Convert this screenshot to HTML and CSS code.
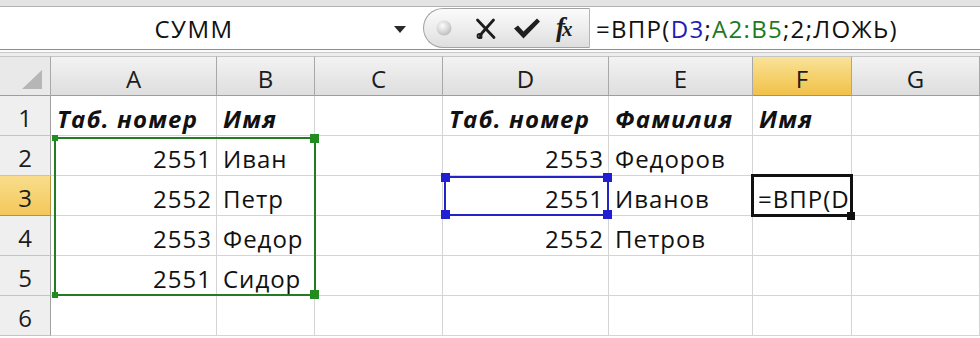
FILE: index.html
```html
<!DOCTYPE html>
<html lang="ru">
<head>
<meta charset="utf-8">
<link rel="stylesheet" href="styles.css">
</head>
<body>
<div class="app">
  <div class="topstrip"></div>
  <div class="fbar">
    <div class="namebox">
      <span class="name">СУММ</span>
      <span class="dd"><svg width="12" height="7" viewBox="0 0 12 7"><path d="M0 0 H12 L6 7 Z" fill="#2a2a2a"/></svg></span>
    </div>
    <div class="btns">
      <svg class="icons" width="120" height="39" viewBox="0 0 120 39">
        <defs>
          <radialGradient id="ball" cx="0.4" cy="0.35" r="0.7">
            <stop offset="0" stop-color="#fbfbfb"/>
            <stop offset="0.6" stop-color="#d6d6d6"/>
            <stop offset="1" stop-color="#b9b9b9"/>
          </radialGradient>
        </defs>
        <circle cx="20" cy="19" r="7.5" fill="url(#ball)"/>
        <path d="M53.5 11 L70 28.5" stroke="#1c1c1c" stroke-width="2.8" fill="none" stroke-linecap="round"/>
        <path d="M69.5 11 L58 24 Q55.5 27 57 28.5" stroke="#1c1c1c" stroke-width="2.8" fill="none" stroke-linecap="round"/>
        <circle cx="55.5" cy="27" r="2" fill="none" stroke="#1c1c1c" stroke-width="1.8"/>
        <path d="M90 19.5 L94 16.5 L99.5 22.5 L113 9.5 L116 12.5 L99.5 29.5 Z" fill="#1f1f1f"/>
      </svg>
      <span class="fx"><i>f</i><i class="x">x</i></span>
    </div>
    <div class="formula">=ВПР(<span class="ref-blue">D3</span>;<span class="ref-green">A2:B5</span>;2;ЛОЖЬ)</div>
  </div>
  <div class="gap"></div>

  <div class="sheet">
    <div class="corner"><svg width="20" height="19" viewBox="0 0 20 19"><path d="M0 19 H20 V0 Z" fill="#b6b6b6"/></svg></div>
    <div class="ch">A</div>
    <div class="ch">B</div>
    <div class="ch">C</div>
    <div class="ch">D</div>
    <div class="ch">E</div>
    <div class="ch ch-sel">F</div>
    <div class="ch">G</div>

    <div class="rh">1</div>
    <div class="c b">Таб. номер</div>
    <div class="c b">Имя</div>
    <div class="c"></div>
    <div class="c b">Таб. номер</div>
    <div class="c b">Фамилия</div>
    <div class="c b">Имя</div>
    <div class="c"></div>

    <div class="rh">2</div>
    <div class="c n">2551</div>
    <div class="c">Иван</div>
    <div class="c"></div>
    <div class="c n">2553</div>
    <div class="c">Федоров</div>
    <div class="c"></div>
    <div class="c"></div>

    <div class="rh rh-sel">3</div>
    <div class="c n">2552</div>
    <div class="c">Петр</div>
    <div class="c"></div>
    <div class="c n">2551</div>
    <div class="c">Иванов</div>
    <div class="c edit">=ВПР(D</div>
    <div class="c"></div>

    <div class="rh">4</div>
    <div class="c n">2553</div>
    <div class="c">Федор</div>
    <div class="c"></div>
    <div class="c n">2552</div>
    <div class="c">Петров</div>
    <div class="c"></div>
    <div class="c"></div>

    <div class="rh">5</div>
    <div class="c n">2551</div>
    <div class="c">Сидор</div>
    <div class="c"></div>
    <div class="c"></div>
    <div class="c"></div>
    <div class="c"></div>
    <div class="c"></div>

    <div class="rh">6</div>
    <div class="c"></div>
    <div class="c"></div>
    <div class="c"></div>
    <div class="c"></div>
    <div class="c"></div>
    <div class="c"></div>
    <div class="c"></div>

    <div class="range-green">
      <span class="h h-tl"></span><span class="h h-tr"></span>
      <span class="h h-bl"></span><span class="h h-br"></span>
    </div>
    <div class="range-blue">
      <span class="h h-tl"></span><span class="h h-tr"></span>
      <span class="h h-bl"></span><span class="h h-br"></span>
    </div>
    <div class="active">
      <span class="fill"></span>
    </div>
  </div>
</div>
</body>
</html>
```

FILE: styles.css
```css
* { box-sizing: border-box; margin: 0; padding: 0; }
html, body { width: 980px; height: 338px; overflow: hidden; background: #fff; }
body { font-family: "Open Sans", "Noto Sans", sans-serif; color: #111; }

.app { width: 980px; }

.topstrip { height: 7px; background: #e4e4e4; border-bottom: 1px solid #b2b2b2; }

.fbar {
  display: flex;
  height: 43px;
  background: #fff;
  border-bottom: 1px solid #8c8c8c;
}
.namebox {
  width: 423px;
  display: flex;
  align-items: center;
}
.name {
  flex: 0 0 388px;
  text-align: center;
  font-size: 24px;
  letter-spacing: 1.5px;
  line-height: 42px;
  padding-top: 1px;
  color: #111;
}
.dd { display: flex; align-items: center; padding-left: 6px; padding-top: 2px; }

.btns {
  width: 167px;
  height: 40px;
  margin-top: 1px;
  display: flex;
  align-items: center;
  border: 1px solid #a3a3a3;
  border-right: 1px solid #b5b5b5;
  border-radius: 21px 0 0 21px;
  background: linear-gradient(#fbfbfb, #ececec 55%, #dedede);
}
.icons { flex: 0 0 120px; }
.fx {
  font-family: "Liberation Serif", "DejaVu Serif", serif;
  font-weight: bold;
  font-size: 27px;
  color: #1c1c1c;
  padding-left: 12px;
  padding-bottom: 2px;
  letter-spacing: -3px;
}
.fx .x { font-size: 21px; }

.formula {
  flex: 1;
  padding-left: 6px;
  font-size: 24px;
  letter-spacing: 1.3px;
  line-height: 42px;
  padding-top: 1px;
  white-space: nowrap;
  color: #111;
}
.ref-blue { color: #1d1db9; }
.ref-green { color: #1d7a1d; }

.gap {
  height: 6px;
  background: linear-gradient(#fbfbfb 0 2px, #c9c9c9 2px 3px, #ededed 3px);
}

.sheet {
  position: relative;
  display: grid;
  grid-template-columns: 51px 166px 98px 128px 166px 144px 99px 128px;
  grid-auto-rows: 40px;
  font-size: 24px;
}

.corner {
  background: #e9e9e9;
  border-right: 1px solid #a8a8a8;
  border-bottom: 1px solid #9d9d9d;
  border-top: 1px solid #c6c6c6;
  display: flex;
  align-items: flex-end;
  justify-content: flex-end;
  padding: 0 8px 6px 0;
}
.ch {
  background: linear-gradient(#f3f3f3, #e6e6e6 60%, #dedede);
  border-right: 1px solid #a8a8a8;
  border-bottom: 1px solid #9d9d9d;
  border-top: 1px solid #c6c6c6;
  text-align: center;
  line-height: 31px;
  padding-top: 6px;
  color: #1c1c1c;
}
.ch-sel {
  background: linear-gradient(#f9e29a, #f5d06a 55%, #f1c14a);
  border-right-color: #c9a54e;
  border-bottom-color: #b8923a;
}
.rh {
  background: #efefef;
  border-right: 1px solid #a0a0a0;
  border-bottom: 1px solid #c4c4c4;
  text-align: center;
  line-height: 31px;
  padding-top: 6px;
  color: #1c1c1c;
}
.rh-sel {
  background: linear-gradient(#f9dd8c, #f3c85a);
  border-right-color: #b8923a;
  border-bottom-color: #b8923a;
}

.c {
  border-right: 1px solid #d4d4d4;
  border-bottom: 1px solid #d4d4d4;
  padding: 7px 5px 0 6px;
  line-height: 31px;
  letter-spacing: 1px;
  white-space: nowrap;
  overflow: hidden;
  color: #111;
}
.c.n { text-align: right; padding-right: 4px; }
.c.b { font-weight: bold; font-style: italic; letter-spacing: 1.2px; }
.c.edit { padding-left: 5px; overflow: hidden; }

/* overlays */
.range-green {
  position: absolute;
  left: 54px; top: 81px;
  width: 262px; height: 159px;
  border: 2px solid #237b23;
}
.range-blue {
  position: absolute;
  left: 444px; top: 120px;
  width: 165px; height: 40px;
  border: 2px solid #2424c6;
}
.h { position: absolute; display: block; }
.range-green .h { background: #228b22; }
.range-green .h-tl { width: 6px; height: 6px; left: -4px; top: -4px; }
.range-green .h-bl { width: 6px; height: 6px; left: -4px; bottom: -4px; }
.range-green .h-tr { width: 9px; height: 9px; right: -5px; top: -5px; }
.range-green .h-br { width: 9px; height: 9px; right: -5px; bottom: -5px; }
.range-blue .h { background: #2020d0; width: 9px; height: 9px; }
.range-blue .h-tl { left: -5px; top: -5px; }
.range-blue .h-tr { right: -5px; top: -5px; }
.range-blue .h-bl { left: -5px; bottom: -5px; }
.range-blue .h-br { right: -5px; bottom: -5px; }

.active {
  position: absolute;
  left: 751px; top: 118px;
  width: 102px; height: 43px;
  border: 3px solid #111;
}
.fill {
  position: absolute;
  right: -5px; bottom: -6px;
  width: 8px; height: 8px;
  background: #111;
}
```
